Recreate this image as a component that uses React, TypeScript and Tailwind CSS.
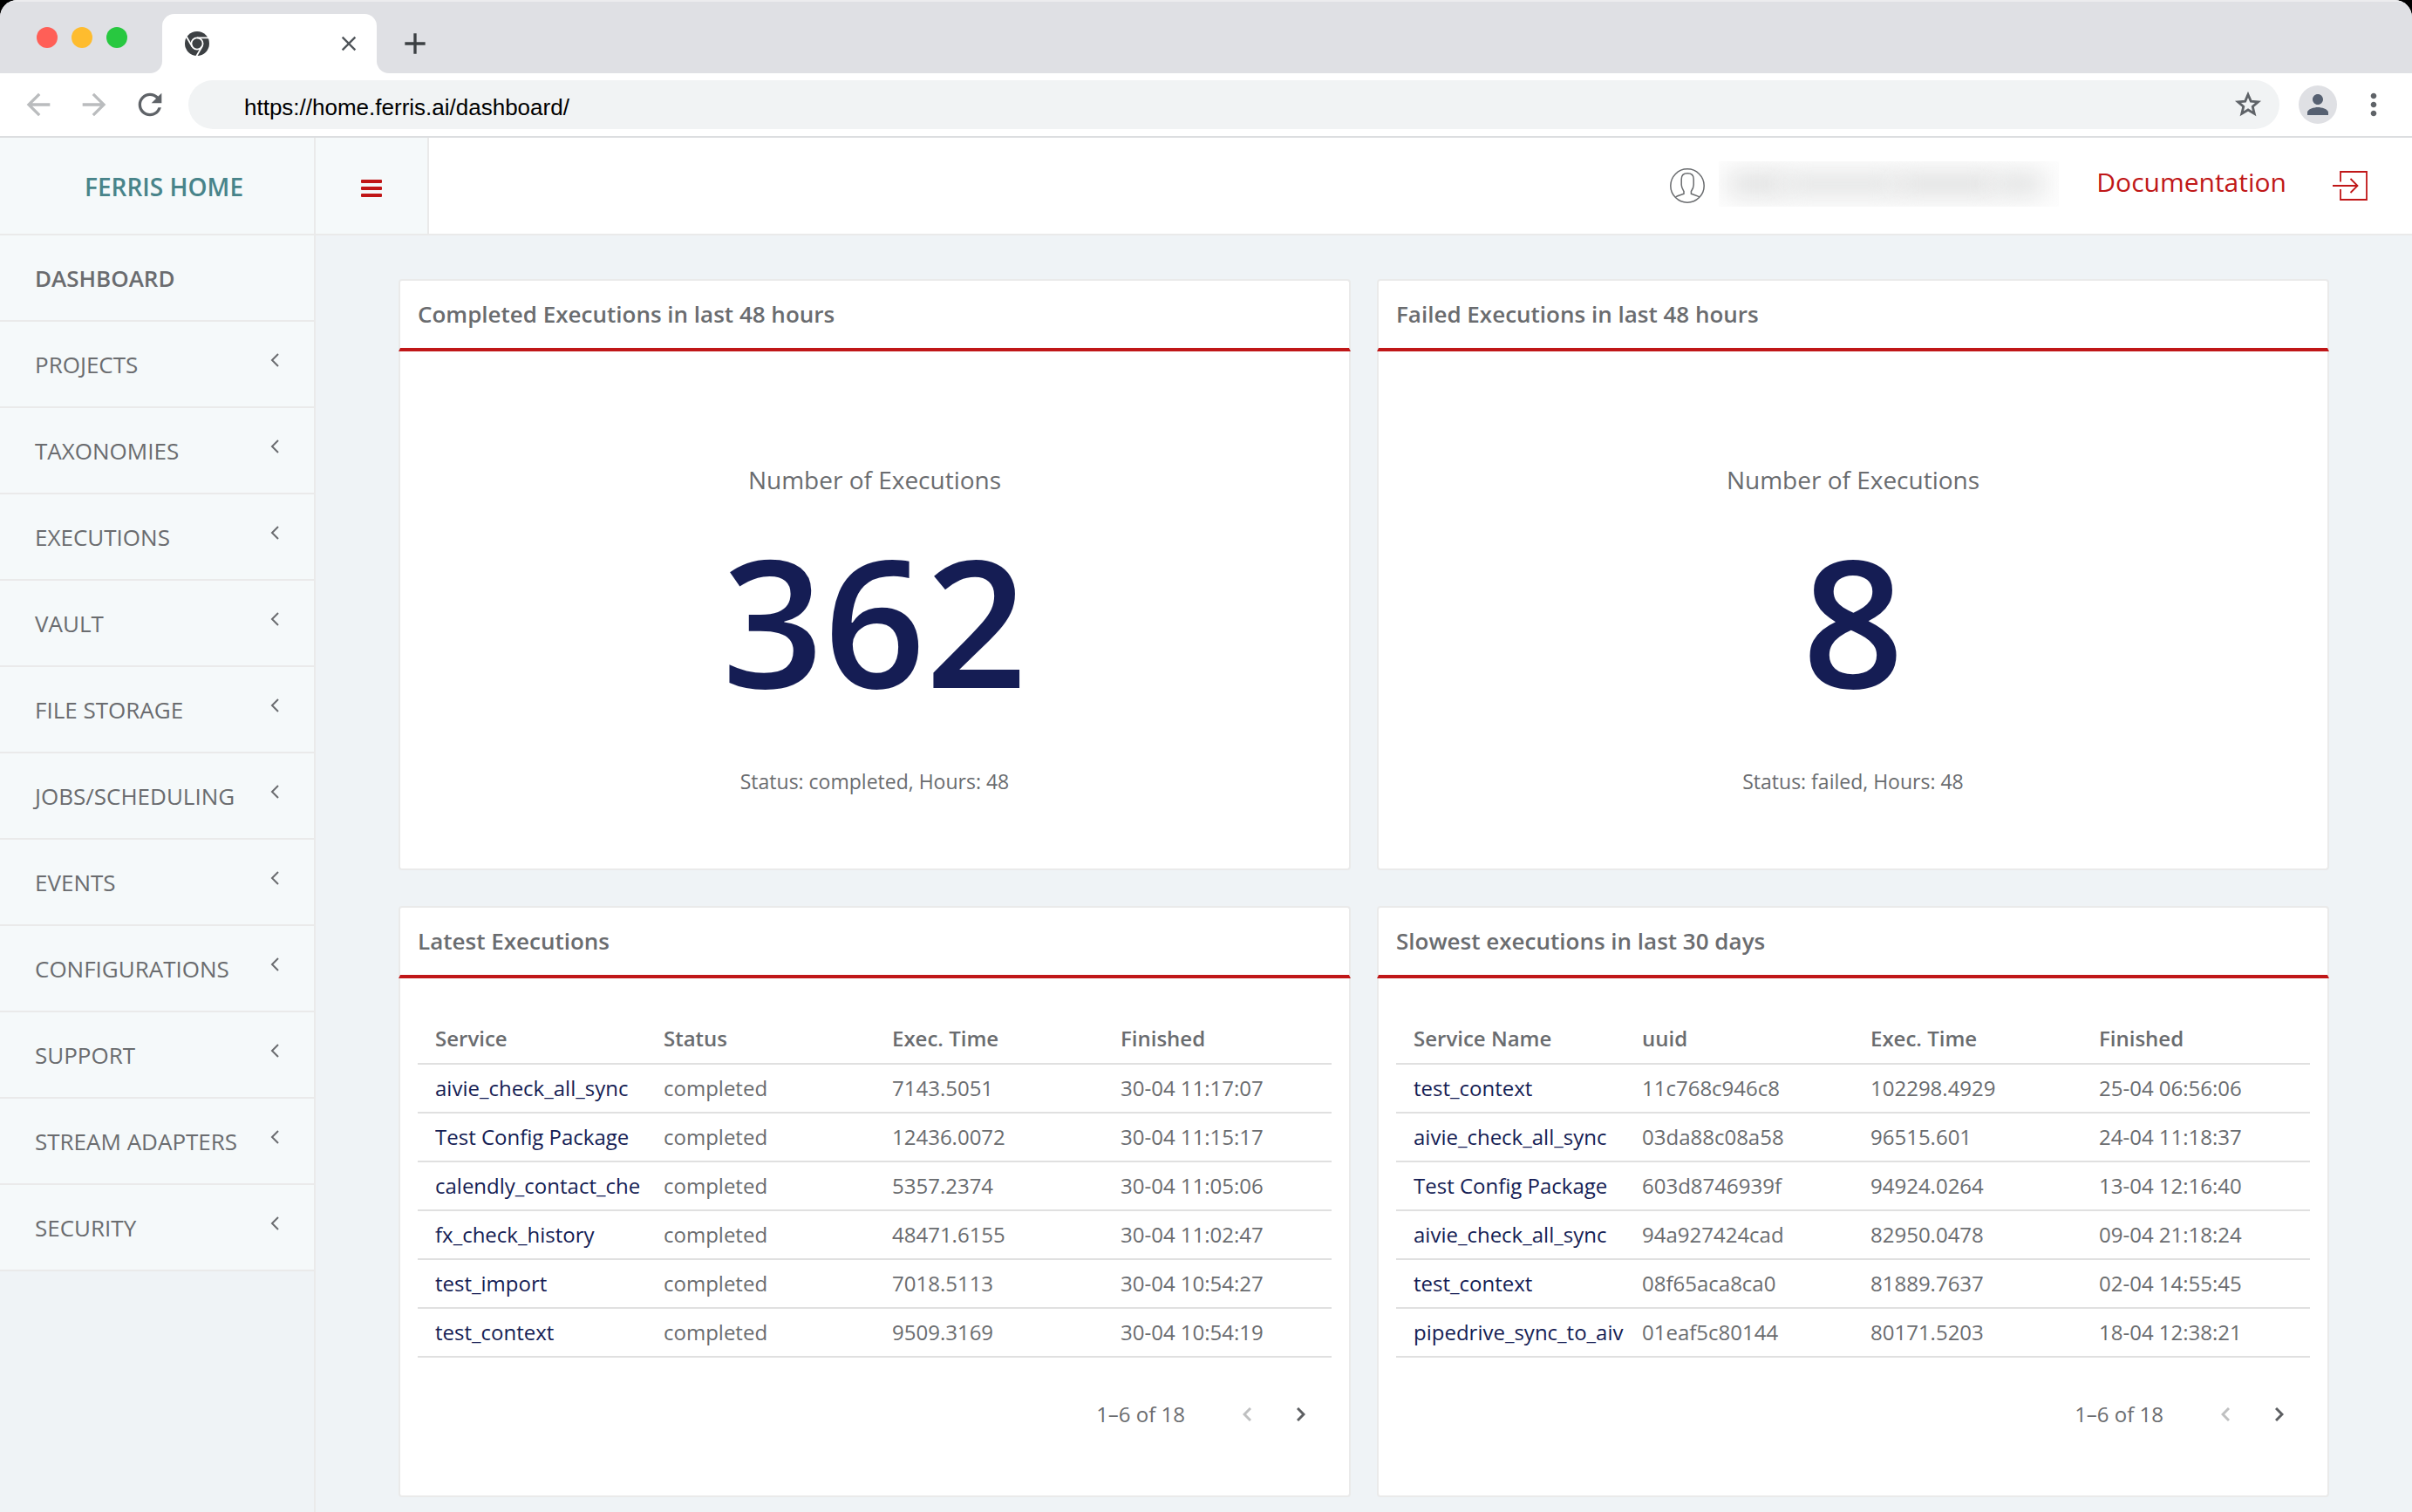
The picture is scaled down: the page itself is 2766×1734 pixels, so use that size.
import type { ReactNode } from "react";
import {
  MdAdd,
  MdArrowBack,
  MdArrowForward,
  MdClose,
  MdMoreVert,
  MdPerson,
  MdRefresh,
} from "react-icons/md";

type Row = [string, string, string, string];

const menu = [
  "PROJECTS",
  "TAXONOMIES",
  "EXECUTIONS",
  "VAULT",
  "FILE STORAGE",
  "JOBS/SCHEDULING",
  "EVENTS",
  "CONFIGURATIONS",
  "SUPPORT",
  "STREAM ADAPTERS",
  "SECURITY",
];

const latest: Row[] = [
  ["aivie_check_all_sync", "completed", "7143.5051", "30-04 11:17:07"],
  ["Test Config Package", "completed", "12436.0072", "30-04 11:15:17"],
  ["calendly_contact_che", "completed", "5357.2374", "30-04 11:05:06"],
  ["fx_check_history", "completed", "48471.6155", "30-04 11:02:47"],
  ["test_import", "completed", "7018.5113", "30-04 10:54:27"],
  ["test_context", "completed", "9509.3169", "30-04 10:54:19"],
];

const slowest: Row[] = [
  ["test_context", "11c768c946c8", "102298.4929", "25-04 06:56:06"],
  ["aivie_check_all_sync", "03da88c08a58", "96515.601", "24-04 11:18:37"],
  ["Test Config Package", "603d8746939f", "94924.0264", "13-04 12:16:40"],
  ["aivie_check_all_sync", "94a927424cad", "82950.0478", "09-04 21:18:24"],
  ["test_context", "08f65aca8ca0", "81889.7637", "02-04 14:55:45"],
  ["pipedrive_sync_to_aiv", "01eaf5c80144", "80171.5203", "18-04 12:38:21"],
];

function ChromeMark() {
  return (
    <svg viewBox="0 0 28 28" className="size-7" aria-hidden="true">
      <circle cx="14" cy="14" r="14" fill="#3c4043" />
      <circle cx="14" cy="14" r="6.6" fill="none" stroke="#fff" strokeWidth="1.8" />
      <g stroke="#fff" strokeWidth="1.8">
        <path d="M14 7.4H27" />
        <path d="M14 7.4H27" transform="rotate(120 14 14)" />
        <path d="M14 7.4H27" transform="rotate(240 14 14)" />
      </g>
    </svg>
  );
}

function StarIcon() {
  return (
    <svg viewBox="0 0 24 24" className="size-9" fill="none" stroke="#5f6368" strokeWidth="1.9" aria-hidden="true">
      <path d="M12 4.300L14.200 9.400L19.700 9.900L15.500 13.500L16.800 18.900L12 16L7.200 18.900L8.500 13.500L4.300 9.900L9.800 9.400Z" />
    </svg>
  );
}

function UserIcon() {
  return (
    <svg viewBox="0 0 40 40" className="size-10" fill="none" stroke="#6a6c6f" strokeWidth="1.5" aria-hidden="true">
      <circle cx="20" cy="20" r="19.2" />
      <path d="M6.500 33 C9 31.200 12.500 30.600 16 29.200 V26.500 C14.500 24 13.200 22 13.200 19 V12.500 C13.200 8 16 5.800 20.200 5.800 C24.500 5.800 27.200 8 27.200 12.500 V19 C27.200 22 26 24 24.400 26.500 V29.200 C28 30.600 31.500 31.200 34 33" />
    </svg>
  );
}

function LogoutIcon() {
  return (
    <svg viewBox="0 0 40 34" className="h-[34px] w-10" fill="none" stroke="#c01718" strokeWidth="1.8" aria-hidden="true">
      <path d="M9 12.500V1H39V33H9V21" />
      <path d="M0 17H28.500M20.500 9L28.500 17L20.500 25" />
    </svg>
  );
}

function Chevron({ side, color, weight }: { side: "left" | "right"; color: string; weight: number }) {
  return (
    <svg viewBox="0 0 10 16" className="h-4 w-2.5" fill="none" stroke={color} strokeWidth={weight} aria-hidden="true">
      <path d={side === "left" ? "M9 1L2 8L9 15" : "M1 1L8 8L1 15"} />
    </svg>
  );
}

function BrowserBar() {
  return (
    <div className="overflow-hidden rounded-t-[20px] bg-white">
      <div className="flex h-[84px] items-end border-t-2 border-[#ececee] bg-[#dfe0e4]">
        <div className="flex h-full w-[172px] items-center gap-4 pl-[42px]">
          <span className="size-6 rounded-full bg-[#ff5f57]" />
          <span className="size-6 rounded-full bg-[#febc2e]" />
          <span className="size-6 rounded-full bg-[#28c840]" />
        </div>
        <div className="h-3.5 w-3.5 bg-white">
          <div className="h-full w-full rounded-br-[14px] bg-[#dfe0e4]" />
        </div>
        <div className="flex h-[68px] w-[246px] items-center justify-between rounded-t-[14px] bg-white pr-[18px] pl-[26px]">
          <ChromeMark />
          <button type="button" aria-label="Close tab">
            <MdClose className="size-7 text-[#50555a]" />
          </button>
        </div>
        <div className="h-3.5 w-3.5 bg-white">
          <div className="h-full w-full rounded-bl-[14px] bg-[#dfe0e4]" />
        </div>
        <button type="button" aria-label="New tab" className="flex h-[68px] items-center pl-2.5">
          <MdAdd className="size-10 text-[#3c4043]" />
        </button>
      </div>
      <div className="flex h-[74px] items-center border-b-2 border-[#dcdee0] px-6">
        <button type="button" aria-label="Back">
          <MdArrowBack className="size-10 text-[#babcbe]" />
        </button>
        <button type="button" aria-label="Forward" className="pl-6">
          <MdArrowForward className="size-10 text-[#babcbe]" />
        </button>
        <button type="button" aria-label="Reload" className="pl-6">
          <MdRefresh className="size-10 text-[#5f6368]" />
        </button>
        <div className="ml-6 flex h-14 flex-1 items-center rounded-full bg-[#f1f3f4] pr-[18px] pl-16">
          <input
            type="text"
            aria-label="Address"
            defaultValue="https://home.ferris.ai/dashboard/"
            className="flex-1 bg-transparent pt-1.5 font-['Liberation_Sans',Arial,sans-serif] text-[26px] leading-8 text-black outline-none"
          />
          <button type="button" aria-label="Bookmark">
            <StarIcon />
          </button>
        </div>
        <button type="button" aria-label="Profile" className="ml-[22px] flex size-11 items-center justify-center rounded-full bg-[#dfe0e4]">
          <MdPerson className="size-9 text-[#566071]" />
        </button>
        <button type="button" aria-label="Browser menu" className="ml-[22px]">
          <MdMoreVert className="size-10 text-[#5f6368]" />
        </button>
      </div>
    </div>
  );
}

function Header() {
  return (
    <header className="flex h-28 border-b-2 border-[#eaeaea] bg-white">
      <div className="flex w-[362px] items-center justify-center border-r-2 border-[#eaeaea] bg-[#f5f9fa] pt-0.5 pl-4">
        <a href="#home" className="text-[28px] leading-10 font-semibold text-[#48848a]">FERRIS HOME</a>
      </div>
      <button type="button" aria-label="Toggle menu" className="flex w-[130px] flex-col items-center justify-center gap-1 border-r-2 border-[#eaeaea] bg-[#f5f9fa] pt-1.5">
        <span className="h-1 w-6 rounded-[1px] bg-[#c01718]" />
        <span className="h-1 w-6 rounded-[1px] bg-[#c01718]" />
        <span className="h-1 w-6 rounded-[1px] bg-[#c01718]" />
      </button>
      <div className="flex flex-1 items-center justify-end pr-[51px]">
        <UserIcon />
        <div className="mr-[43px] mb-1 ml-4 flex h-[52px] w-[390px] items-center overflow-hidden bg-[#fdfdfd] px-3" aria-hidden="true">
          <span className="h-6 w-16 bg-[#dcdddd] blur-[14px]" />
          <span className="h-6 w-32 bg-[#e0e1e1] blur-[14px]" />
          <span className="h-6 w-28 bg-[#dcdddd] blur-[14px]" />
          <span className="h-6 w-14 bg-[#dedfdf] blur-[14px]" />
        </div>
        <a href="#documentation" className="pb-2 text-[30px] leading-10 text-[#c01718]">Documentation</a>
        <a href="#logout" aria-label="Log out" className="ml-[53px]">
          <LogoutIcon />
        </a>
      </div>
    </header>
  );
}

function Sidebar() {
  return (
    <nav className="w-[362px] shrink-0 border-r-2 border-[#eaeaea] text-[26px] leading-9 text-[#6a6c6f]">
      <ul>
        <li className="border-b-2 border-[#eaeaea] bg-[#f5f9fa]">
          <a href="#dashboard" className="flex h-[97px] items-center px-10 font-semibold">DASHBOARD</a>
        </li>
        {menu.map((label) => (
          <li key={label} className="border-b-2 border-[#eaeaea] bg-[#f5f9fa]">
            <a href="#section" className="flex h-[97px] items-center justify-between px-10">
              {label}
              <span className="pb-2.5">
                <Chevron side="left" color="#6a6c6f" weight={2} />
              </span>
            </a>
          </li>
        ))}
      </ul>
    </nav>
  );
}

function Card({ title, children }: { title: string; children: ReactNode }) {
  return (
    <section className="flex flex-col">
      <h2 className="rounded-t-[4px] border-x-2 border-t-2 border-b-4 border-[#eaeaea] border-b-[#c01718] bg-white px-5 pt-5 pb-[21px] text-[26px] leading-9 font-semibold text-[#6a6c6f]">
        {title}
      </h2>
      <div className="flex flex-1 flex-col rounded-b-[4px] border-x-2 border-b-2 border-[#eaeaea] bg-white">{children}</div>
    </section>
  );
}

function StatCard({ title, value, note }: { title: string; value: string; note: string }) {
  return (
    <Card title={title}>
      <div className="flex flex-1 flex-col items-center justify-center pt-[46px] text-[#6a6c6f]">
        <p className="text-[28px] leading-10">Number of Executions</p>
        <p className="pt-1 pb-[30px] text-[204px] leading-[272px] font-semibold text-[#151d54]">{value}</p>
        <p className="text-[23px] leading-10">{note}</p>
      </div>
    </Card>
  );
}

function TableCard({ title, columns, rows }: { title: string; columns: Row; rows: Row[] }) {
  return (
    <Card title={title}>
      <div className="px-5 pt-10 pb-[55px] text-[24px] leading-8 text-[#6a6c6f]">
        <table className="w-full table-fixed border-collapse text-left">
          <thead>
            <tr className="h-[58px] border-b-2 border-[#e0e0e0]">
              {columns.map((column) => (
                <th key={column} className="pl-5 font-semibold">{column}</th>
              ))}
            </tr>
          </thead>
          <tbody>
            {rows.map(([name, second, time, finished]) => (
              <tr key={second + time} className="h-14 border-b-2 border-[#e0e0e0]">
                <td className="pl-5">
                  <a href="#service" className="block overflow-hidden whitespace-nowrap text-[#151d54]">{name}</a>
                </td>
                <td className="pl-5">{second}</td>
                <td className="pl-5">{time}</td>
                <td className="pl-5 whitespace-nowrap">{finished}</td>
              </tr>
            ))}
          </tbody>
        </table>
        <div className="mt-7 flex h-[74px] items-center justify-end pr-[30px]">
          <span>1–6 of 18</span>
          <button type="button" aria-label="Previous page" disabled className="ml-[66px]">
            <Chevron side="left" color="#bfc0c1" weight={3} />
          </button>
          <button type="button" aria-label="Next page" className="ml-[52px]">
            <Chevron side="right" color="#5d5f62" weight={3} />
          </button>
        </div>
      </div>
    </Card>
  );
}

export default function App() {
  return (
    <div className="flex min-h-screen flex-col bg-black font-['Open_Sans','Noto_Sans',sans-serif]">
      <BrowserBar />
      <Header />
      <div className="flex flex-1 bg-[#eff3f6]">
        <Sidebar />
        <main className="grid flex-1 auto-rows-fr grid-cols-2 gap-x-[30px] gap-y-[41px] px-[95px] pt-[50px] pb-[17px]">
          <StatCard title="Completed Executions in last 48 hours" value="362" note="Status: completed, Hours: 48" />
          <StatCard title="Failed Executions in last 48 hours" value="8" note="Status: failed, Hours: 48" />
          <TableCard title="Latest Executions" columns={["Service", "Status", "Exec. Time", "Finished"]} rows={latest} />
          <TableCard title="Slowest executions in last 30 days" columns={["Service Name", "uuid", "Exec. Time", "Finished"]} rows={slowest} />
        </main>
      </div>
    </div>
  );
}
